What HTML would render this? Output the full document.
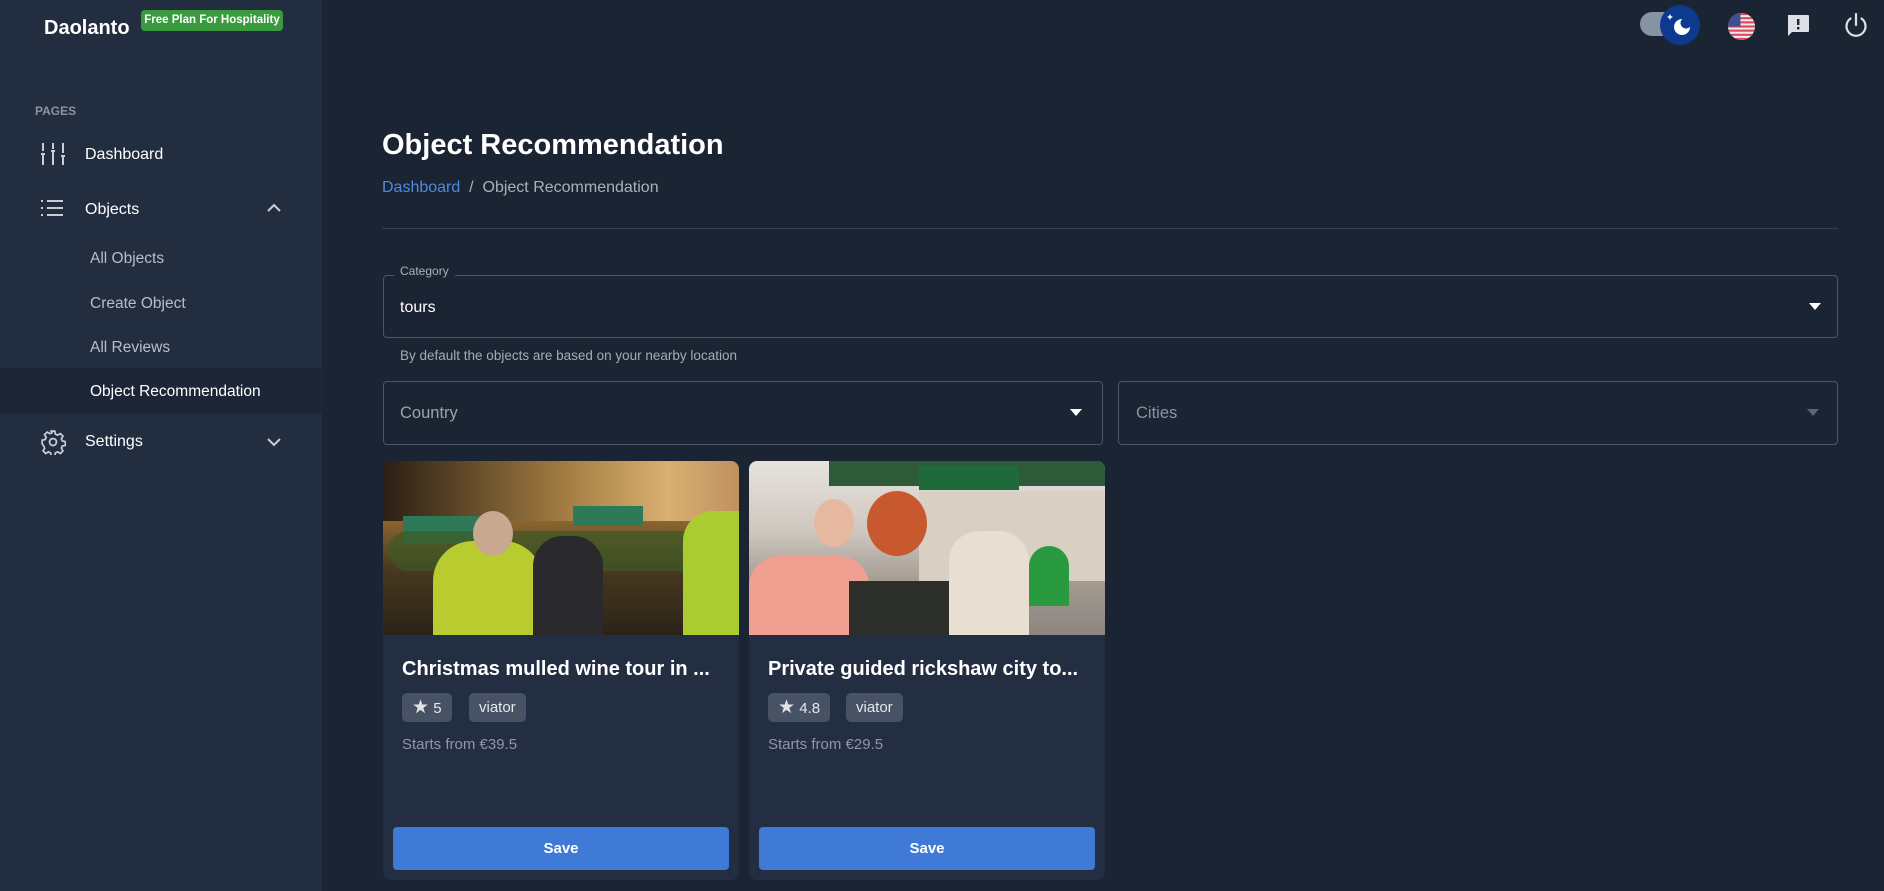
<!DOCTYPE html>
<html><head><meta charset="utf-8"><style>
*{box-sizing:border-box;margin:0;padding:0}
body{width:1884px;height:891px;overflow:hidden;background:#1b2433;font-family:"Liberation Sans",sans-serif;color:#fff;position:relative}
.side{position:absolute;left:0;top:0;width:322px;height:891px;background:#222d40}
.abs{position:absolute}
.logo{left:44px;top:15px;font-size:20px;font-weight:bold;color:#fff}
.badge{left:141px;top:10px;width:142px;height:21px;background:#3a9a3f;border-radius:4px;font-size:11.5px;font-weight:bold;color:#fff;text-align:center;line-height:21px}
.pages{left:35px;top:104px;font-size:12px;font-weight:bold;color:#8a93a3}
.nav{font-size:16px;color:#fff}
.sub{font-size:15.5px;color:#b8bec9}
.hl{left:0;top:368px;width:322px;height:46px;background:#1c2636}
.title{left:382px;top:129px;font-size:29px;font-weight:bold}
.bc{left:382px;top:179px;font-size:16px;color:#aab1bd}
.bc a{color:#4d8ae0;text-decoration:none}
.hr{left:382px;top:228px;width:1456px;height:1px;background:#364154}
.field{border:1px solid #4a5567;border-radius:4px}
.card{background:#232e42;border-radius:8px;overflow:hidden;width:356px;height:419px;top:461px}
.img{height:174px;position:relative;overflow:hidden}
.ct{position:absolute;left:19px;top:197px;font-size:20px;font-weight:bold;color:#fff;white-space:nowrap}
.chip{position:absolute;top:232px;height:29px;background:#475264;border-radius:5px;font-size:15px;color:#e6e8ec;line-height:29px;padding:0 10px}
.price{position:absolute;left:19px;top:275px;font-size:15px;color:#8e97a6}
.save{position:absolute;left:10px;top:366px;width:336px;height:43px;background:#3f7ad6;border-radius:4px;font-size:15px;font-weight:bold;text-align:center;line-height:43px}
</style></head><body>
<div class="side"></div>
<div class="abs logo" style="top:17px">Daolanto</div>
<div class="abs badge">Free Plan For Hospitality</div>
<div class="abs pages">PAGES</div>
<svg class="abs" style="left:40px;top:142px" width="26" height="24" viewBox="0 0 26 24" stroke="#c9ced6" stroke-width="2" fill="none"><path d="M3 1v8M1 12h4M3 13v10M13 1v6M11 9h4M13 10v13M23 1v10M21 14h4M23 15v8"/></svg>
<div class="abs nav" style="left:85px;top:146px">Dashboard</div>
<svg class="abs" style="left:40px;top:199px" width="24" height="18" viewBox="0 0 24 18" stroke="#c9ced6" stroke-width="2"><path d="M1 2h2M1 9h2M1 16h2M7 2h16M7 9h16M7 16h16"/></svg>
<div class="abs nav" style="left:85px;top:201px">Objects</div>
<svg class="abs" style="left:267px;top:203px" width="14" height="9" viewBox="0 0 14 9" stroke="#c9ced6" stroke-width="2" fill="none"><path d="M1 8l6-6 6 6"/></svg>
<div class="abs sub" style="left:90px;top:250px">All Objects</div>
<div class="abs sub" style="left:90px;top:295px">Create Object</div>
<div class="abs sub" style="left:90px;top:339px">All Reviews</div>
<div class="abs hl"></div>
<div class="abs nav" style="left:90px;top:383px;font-size:15.5px">Object Recommendation</div>
<svg class="abs" style="left:40px;top:429px" width="26" height="26" viewBox="0 0 24 24" fill="none" stroke="#c9ced6" stroke-width="1.6"><circle cx="12" cy="12" r="3.2"/><path d="M10.3 2h3.4l.6 2.8 2 .9 2.5-1.5 2.4 2.4-1.5 2.5.9 2 2.8.6v3.4l-2.8.6-.9 2 1.5 2.5-2.4 2.4-2.5-1.5-2 .9-.6 2.8h-3.4l-.6-2.8-2-.9-2.5 1.5-2.4-2.4 1.5-2.5-.9-2L2 13.7v-3.4l2.8-.6.9-2-1.5-2.5 2.4-2.4 2.5 1.5 2-.9z"/></svg>
<div class="abs nav" style="left:85px;top:433px">Settings</div>
<svg class="abs" style="left:267px;top:438px" width="14" height="9" viewBox="0 0 14 9" stroke="#c9ced6" stroke-width="2" fill="none"><path d="M1 1l6 6 6-6"/></svg>

<!-- top bar icons -->
<div class="abs" style="left:1640px;top:12px;width:46px;height:24px;border-radius:12px;background:#8593a3"></div>
<div class="abs" style="left:1660px;top:5px;width:40px;height:40px;border-radius:50%;background:#0d3a8f"></div>
<svg class="abs" style="left:1666px;top:11px" width="30" height="30" viewBox="0 0 30 30"><path d="M4 3l1 2 2 1-2 1-1 2-1-2-2-1 2-1z" fill="#fff"/><circle cx="16" cy="16" r="8" fill="#fff"/><circle cx="20" cy="12" r="5.5" fill="#0d3a8f"/></svg>
<svg class="abs" style="left:1728px;top:13px" width="27" height="27" viewBox="0 0 26 26"><defs><clipPath id="c"><circle cx="13" cy="13" r="13"/></clipPath></defs><g clip-path="url(#c)"><rect width="26" height="26" fill="#f0e8ea"/><g fill="#d6485a"><rect y="0" width="26" height="2"/><rect y="4" width="26" height="2"/><rect y="8" width="26" height="2"/><rect y="12" width="26" height="2"/><rect y="16" width="26" height="2"/><rect y="20" width="26" height="2"/><rect y="24" width="26" height="2"/></g><rect width="12" height="13" fill="#3c4f8f"/></g></svg>
<svg class="abs" style="left:1786px;top:14px" width="24" height="24" viewBox="0 0 24 24"><path d="M2 1h20a1 1 0 0 1 1 1v15a1 1 0 0 1-1 1H6l-4 4z" fill="#dde1e6"/><rect x="11" y="5" width="2.4" height="6" fill="#1b2433"/><rect x="11" y="13" width="2.4" height="2.4" fill="#1b2433"/></svg>
<svg class="abs" style="left:1843px;top:12px" width="26" height="28" viewBox="0 0 26 28" fill="none" stroke="#dde1e6" stroke-width="2.2" stroke-linecap="round"><path d="M13 2v11"/><path d="M7.5 6.5a9.5 9.5 0 1 0 11 0"/></svg>

<div class="abs title">Object Recommendation</div>
<div class="abs bc"><a>Dashboard</a>&nbsp;&nbsp;/&nbsp;&nbsp;Object Recommendation</div>
<div class="abs hr"></div>

<div class="abs field" style="left:383px;top:275px;width:1455px;height:63px"></div>
<div class="abs" style="left:394px;top:264px;padding:0 6px;background:#1b2433;font-size:12px;color:#aab1bd">Category</div>
<div class="abs" style="left:400px;top:299px;font-size:16px;color:#fff">tours</div>
<svg class="abs" style="left:1809px;top:303px" width="12" height="7"><path d="M0 0h12L6 7z" fill="#fff"/></svg>
<div class="abs" style="left:400px;top:348px;font-size:13.5px;color:#a4abb7">By default the objects are based on your nearby location</div>

<div class="abs field" style="left:383px;top:381px;width:720px;height:64px"></div>
<div class="abs" style="left:400px;top:404px;font-size:16.5px;color:#9aa2af">Country</div>
<svg class="abs" style="left:1070px;top:409px" width="12" height="7"><path d="M0 0h12L6 7z" fill="#fff"/></svg>
<div class="abs field" style="left:1118px;top:381px;width:720px;height:64px"></div>
<div class="abs" style="left:1136px;top:404px;font-size:16.5px;color:#8a93a1">Cities</div>
<svg class="abs" style="left:1807px;top:409px" width="12" height="7"><path d="M0 0h12L6 7z" fill="#5b6677"/></svg>

<div class="abs card" style="left:383px">
 <div class="img" style="background:linear-gradient(180deg,#3a2a18 0%,#8a6530 35%,#4a3a20 60%,#2a2418 100%)">
  <div class="abs" style="left:0;top:0;width:356px;height:60px;background:linear-gradient(90deg,#2a1e14,#a07a40 50%,#d9b070 80%,#c09060)"></div>
  <div class="abs" style="left:20px;top:55px;width:90px;height:28px;background:#2e7a58"></div>
  <div class="abs" style="left:190px;top:45px;width:70px;height:20px;background:#2e7a58"></div>
  <div class="abs" style="left:5px;top:70px;width:340px;height:40px;background:#3d5a25;opacity:.7;border-radius:20px"></div>
  <div class="abs" style="left:50px;top:80px;width:110px;height:100px;background:#b8cc30;border-radius:40px 40px 0 0"></div>
  <div class="abs" style="left:90px;top:50px;width:40px;height:45px;background:#c9a890;border-radius:50%"></div>
  <div class="abs" style="left:150px;top:75px;width:70px;height:100px;background:#2a2a2e;border-radius:30px 30px 0 0"></div>
  <div class="abs" style="left:300px;top:50px;width:60px;height:130px;background:#aacc30;border-radius:30px 0 0 0"></div>
 </div>
 <div class="ct">Christmas mulled wine tour in ...</div>
 <div class="chip" style="left:19px"><span style="font-size:19px;color:#e0e2e6">★</span>&nbsp;5</div>
 <div class="chip" style="left:86px">viator</div>
 <div class="price">Starts from €39.5</div>
 <div class="save">Save</div>
</div>

<div class="abs card" style="left:749px">
 <div class="img" style="background:linear-gradient(180deg,#e6e2dc 0%,#cfc8c0 40%,#a39a90 70%,#8c8680 100%)">
  <div class="abs" style="left:80px;top:0;width:280px;height:25px;background:#2f5a3a"></div>
  <div class="abs" style="left:170px;top:5px;width:100px;height:24px;background:#1e6a3a"></div>
  <div class="abs" style="left:170px;top:30px;width:186px;height:90px;background:#d9d0c4"></div>
  <div class="abs" style="left:0;top:95px;width:120px;height:80px;background:#f0a090;border-radius:30px 30px 0 0"></div>
  <div class="abs" style="left:65px;top:38px;width:40px;height:48px;background:#e6b8a0;border-radius:50%"></div>
  <div class="abs" style="left:118px;top:30px;width:60px;height:65px;background:#c8582e;border-radius:50%"></div>
  <div class="abs" style="left:100px;top:120px;width:100px;height:60px;background:#2c2e2a"></div>
  <div class="abs" style="left:200px;top:70px;width:80px;height:110px;background:#e8ded2;border-radius:30px 30px 0 0"></div>
  <div class="abs" style="left:280px;top:85px;width:40px;height:60px;background:#2a9a40;border-radius:20px 20px 0 0"></div>
 </div>
 <div class="ct">Private guided rickshaw city to...</div>
 <div class="chip" style="left:19px"><span style="font-size:19px;color:#e0e2e6">★</span>&nbsp;4.8</div>
 <div class="chip" style="left:97px">viator</div>
 <div class="price">Starts from €29.5</div>
 <div class="save">Save</div>
</div>
</body></html>
